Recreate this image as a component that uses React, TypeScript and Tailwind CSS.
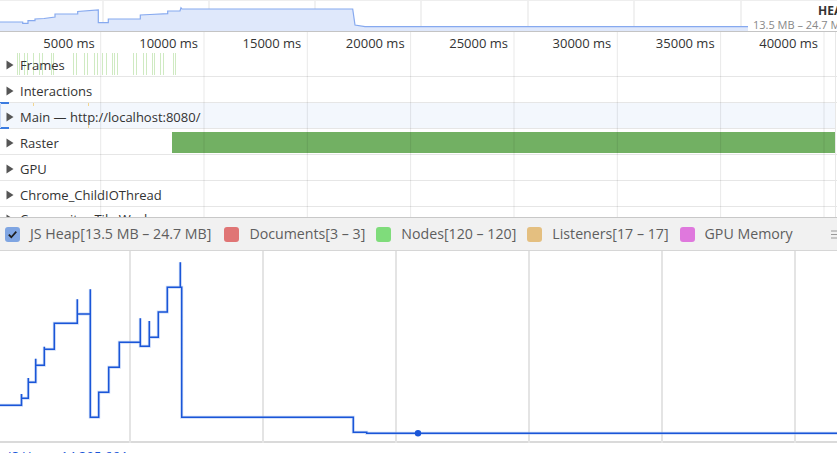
const font = { fontFamily: '"Segoe UI", "Open Sans", "Noto Sans", sans-serif' };

const rulerLines = [100.7, 204, 307.3, 410.6, 514, 617.3, 720.6, 824];
const rulerLabels = ["5000 ms", "10000 ms", "15000 ms", "20000 ms", "25000 ms", "30000 ms", "35000 ms", "40000 ms"];
const overviewLines = [103, 209, 315, 421, 528, 634, 741];
const graphLines = [130, 263, 396, 529, 662, 795];

const frameBars = [17, 19, 24, 27, 33, 39, 42, 51, 53, 73, 76, 84, 87, 94, 97, 102, 106, 112, 114, 117, 133, 136, 143, 146, 152, 154, 160, 163, 173, 175];

const overviewPts =
  "0,22 22.7,22 22.7,23.3 28,23.3 28,20.7 35,20.7 35,19 44,18.5 55,17 55,14 77.7,14 77.7,11.5 98.3,10 98.3,22.7 108.3,22.7 108.3,19 140.3,19 140.3,15 150,14.5 167.7,13.7 167.7,11 180,11 181,7.7 182,9 352.7,9 355,25 365,26.7 748,26.7";

const heapPath =
  "M0,405.3 H21.5 V394 V398.3 H28.3 V378 V382.3 H35.7 V358.7 V365.3 H44.3 V346.7 V349.3 H54.3 V323.3 H77.3 V299.3 V314 H90.3 V289.3 V417.3 H98.7 V392.3 H108.7 V367.3 H119.3 V342.3 H140.3 V318.3 V346.3 H149.3 V321 V337.3 H158.3 V312 H167.3 V287.3 H180.3 V262.3 V287.3 H181.7 V417.3 H353.3 V432.3 H366.7 V433.3 H837";

const tracks = [
  { name: "Frames" },
  { name: "Interactions" },
  { name: "Main — http://localhost:8080/", active: true },
  { name: "Raster" },
  { name: "GPU" },
  { name: "Chrome_ChildIOThread" },
];

const legend = [
  { label: "Documents[3 – 3]", color: "bg-[#e07575]" },
  { label: "Nodes[120 – 120]", color: "bg-[#7fdc7b]" },
  { label: "Listeners[17 – 17]", color: "bg-[#e4bf80]" },
  { label: "GPU Memory", color: "bg-[#df78dd]" },
];

function Arrow() {
  return (
    <svg width="8" height="10" viewBox="0 0 8 10" className="shrink-0">
      <path d="M0.5 0.5 L7.5 5 L0.5 9.5 Z" fill="#555" />
    </svg>
  );
}

export default function App() {
  return (
    <div className="relative w-[837px] h-[453px] overflow-hidden bg-white text-[#333]" style={font}>
      {/* overview */}
      <div className="relative h-[32px] border-b border-[#c4c4c4]">
        <svg width="837" height="31" className="absolute inset-0">
          {overviewLines.map((x) => (
            <line key={x} x1={x} x2={x} y1="0" y2="31" stroke="#e3e3e3" />
          ))}
          <line x1="0" x2="837" y1="0.5" y2="0.5" stroke="#eeeeee" />
          <polygon points={`${overviewPts} 748,31 0,31`} fill="#dfe8fb" />
          <polyline points={overviewPts} fill="none" stroke="#86a9ef" strokeWidth="1.2" />
        </svg>
        <div className="absolute left-[753px] top-[3px] flex flex-col items-start whitespace-nowrap">
          <span className="ml-[65px] text-[12px] font-bold leading-[15px] text-[#333]">HEAP</span>
          <span className="text-[11px] leading-[14px] text-[#888]">13.5 MB – 24.7 MB</span>
        </div>
      </div>

      {/* timeline */}
      <div className="relative h-[186px] border-b border-[#c8c8c8] overflow-hidden">
        <div className="relative h-[19px]">
          {rulerLabels.map((l, i) => (
            <span
              key={l}
              className="absolute top-[3px] text-[13px] leading-[17px] whitespace-nowrap"
              style={{ right: 837 - rulerLines[i] + 6 }}
            >
              {l}
            </span>
          ))}
        </div>

        {tracks.map((t, i) => (
          <div
            key={t.name}
            className={`relative flex h-[26px] items-center gap-[6px] pl-[6px] pt-[3px] border-b border-[#e6e6e6] ${t.active ? "bg-[#f3f7fd] mr-[2px]" : ""}`}
          >
            {i === 0 &&
              frameBars.map((x) => (
                <span key={x} className="absolute top-[2px] h-[22px] w-px bg-[#cfeac2]" style={{ left: x }} />
              ))}
            {i === 3 && <span className="absolute left-[172px] right-[2px] top-[3px] h-[21px] bg-[#72b063]" />}
            {t.active && (
              <>
                <span className="absolute left-0 top-[-1px] h-[2px] w-[9px] bg-[#3b7be0]" />
                <span className="absolute left-0 bottom-[-1px] h-[2px] w-[9px] bg-[#3b7be0]" />
                <span className="absolute left-0 top-0 h-full w-px bg-[#c9d9f5]" />
                <span className="absolute left-[33px] top-0 h-[3px] w-px bg-[#f3d590]" />
                <span className="absolute left-[88px] top-0 h-[3px] w-px bg-[#f3d590]" />
                <span className="absolute left-[88px] bottom-0 h-[3px] w-px bg-[#f3d590]" />
              </>
            )}
            <Arrow />
            <span className="relative text-[13px] leading-[17px] whitespace-nowrap">{t.name}</span>
          </div>
        ))}
        <div className="flex h-[26px] items-start gap-[6px] pl-[6px] pt-[7px]">
          <Arrow />
          <span className="-mt-[3px] text-[13px] leading-[17px] whitespace-nowrap text-[#333]">Compositor Tile Worker</span>
        </div>

        <svg width="837" height="186" className="pointer-events-none absolute inset-0">
          {rulerLines.map((x) => (
            <line key={x} x1={x} x2={x} y1="0" y2="186" stroke="rgba(0,0,0,0.09)" />
          ))}
          <line x1="835.5" x2="835.5" y1="0" y2="186" stroke="#e8e8e8" />
        </svg>
      </div>

      {/* legend */}
      <div className="flex h-[33px] items-center gap-[11px] bg-[#f1f1f1] border-b border-[#d6d6d6] pl-[5px]">
        <div className="mr-[2px] flex items-center gap-[10px]">
          <span className="flex h-[15px] w-[15px] items-center justify-center rounded-[3px] bg-[#7fa5e2]">
            <svg width="11" height="11" viewBox="0 0 11 11">
              <path d="M1.8 5.6 L4.3 8.2 L9.3 2.6" fill="none" stroke="#1e1e1e" strokeWidth="1.7" />
            </svg>
          </span>
          <span className="text-[14.2px] leading-[18px] text-[#5e5e5e] whitespace-nowrap">JS Heap[13.5 MB – 24.7 MB]</span>
        </div>
        {legend.map((l) => (
          <div key={l.label} className="flex items-center gap-[10px]">
            <span className={`h-[15px] w-[15px] rounded-[3px] ${l.color}`} />
            <span className="text-[14.2px] leading-[18px] text-[#5e5e5e] whitespace-nowrap">{l.label}</span>
          </div>
        ))}
        <svg width="6" height="9" viewBox="0 0 6 9" className="ml-auto shrink-0">
          <path d="M0 1 H6 M0 4.5 H6 M0 8 H6" stroke="#999" strokeWidth="1" />
        </svg>
      </div>

      {/* counter graph */}
      <div className="relative h-[192px] border-b-2 border-[#dadada]">
        <svg width="837" height="192" viewBox="0 251 837 192" className="absolute inset-0">
          {graphLines.map((x) => (
            <line key={x} x1={x} x2={x} y1="251" y2="443" stroke="#e4e4e4" strokeWidth="2" />
          ))}
          <path d={heapPath} fill="none" stroke="#a9c1f2" strokeWidth="3" opacity="0.6" />
          <path d={heapPath} fill="none" stroke="#1a56d8" strokeWidth="1.5" />
          <circle cx="418" cy="433.3" r="3.2" fill="#1a56d8" />
        </svg>
      </div>
      <div className="pl-[8px]">
        <span className="text-[13px] leading-[17px] text-[#1a56d8] whitespace-nowrap">JS Heap: 14,305,664</span>
      </div>
    </div>
  );
}
